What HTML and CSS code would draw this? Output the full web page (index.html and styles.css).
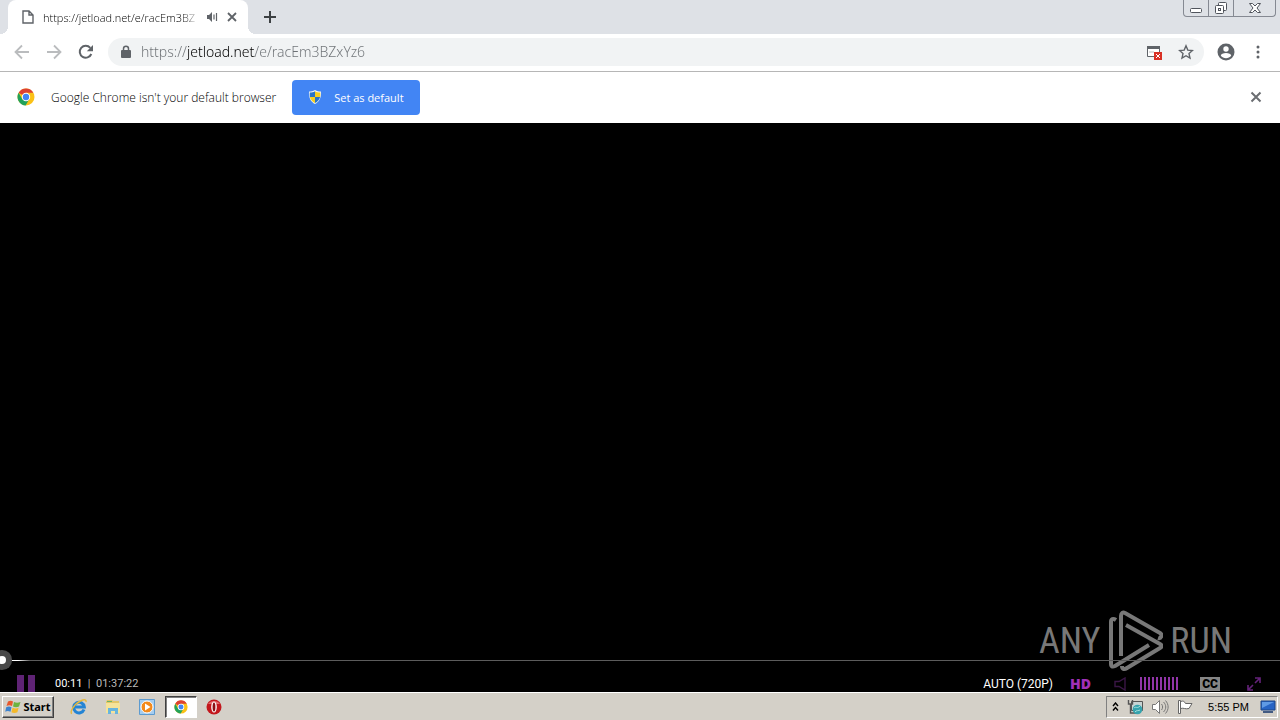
FILE: index.html
```html
<!DOCTYPE html>
<html lang="en">
<head>
    <meta charset="UTF-8">
    <meta name="viewport" content="width=device-width, initial-scale=1.0">
    <title>https://jetload.net/e/racEm3BZxYz6</title>
    <link rel="stylesheet" href="styles.css">
</head>
<body>
    <header class="tab-strip">
        <div class="tab">
            <svg class="icon" width="12" height="14" viewBox="0 0 12 14" fill="none" stroke="#5f6368" stroke-width="1.4"><path d="M1 1h6l4 4v8H1zM7 1v4h4"/></svg>
            <span class="tab-title">https://jetload.net/e/racEm3BZ</span>
            <svg class="icon" width="12" height="12" viewBox="0 0 12 12"><path d="M1 4h2l3-3v10L3 8H1z" fill="#5f6368"/><path d="M8 3.5v5M10.5 2v8" stroke="#5f6368" stroke-width="1.2"/></svg>
            <button class="plain tab-close" aria-label="Close tab">
                <svg width="10" height="10" viewBox="0 0 10 10" stroke="#5f6368" stroke-width="1.8"><path d="M1 1l8 8M9 1L1 9"/></svg>
            </button>
        </div>
        <button class="plain new-tab" aria-label="New tab">
            <svg width="12" height="12" viewBox="0 0 12 12" stroke="#3c4043" stroke-width="2"><path d="M6 0v12M0 6h12"/></svg>
        </button>
        <div class="window-buttons">
            <button aria-label="Minimize">
                <svg width="14" height="12" viewBox="0 0 14 12" fill="#fff" stroke="#50545c"><rect x="1.5" y="6.5" width="11" height="4" rx="1"/></svg>
            </button>
            <button aria-label="Restore">
                <svg width="14" height="14" viewBox="0 0 14 14" fill="#fff" stroke="#50545c"><rect x="4.500" y="1.500" width="8" height="8" rx="1"/><rect x="1.500" y="4.500" width="8" height="8" rx="1"/><rect x="4.500" y="7.500" width="2" height="2"/></svg>
            </button>
            <button class="wide" aria-label="Close">
                <svg width="14" height="12" viewBox="0 0 14 12" fill="#fff" stroke="#50545c"><path d="M1.500 1.500h3L7 4l2.500-2.500h3L9 6l3.500 4.500h-3L7 8l-2.500 2.500h-3L5 6z"/></svg>
            </button>
        </div>
    </header>

    <nav class="toolbar">
        <button class="plain" aria-label="Back">
            <svg width="16" height="16" viewBox="0 0 16 16" fill="none" stroke="#babcbe" stroke-width="1.8"><path d="M15 8H2M8 1.500L1.500 8 8 14.500"/></svg>
        </button>
        <button class="plain" aria-label="Forward">
            <svg width="16" height="16" viewBox="0 0 16 16" fill="none" stroke="#babcbe" stroke-width="1.8"><path d="M1 8h13M8 1.500L14.500 8 8 14.500"/></svg>
        </button>
        <button class="plain" aria-label="Reload">
            <svg width="16" height="16" viewBox="0 0 16 16"><path d="M13.300 10A6 6 0 1 1 12.300 3.800" fill="none" stroke="#5f6368" stroke-width="2"/><path d="M15 1v6.200H8.800z" fill="#5f6368"/></svg>
        </button>
        <div class="omnibox">
            <svg class="icon" width="10" height="14" viewBox="0 0 10 14"><path d="M2.500 6V3.800a2.500 2.500 0 0 1 5 0V6" fill="none" stroke="#5f6368" stroke-width="1.500"/><rect y="5" width="10" height="8" rx="1" fill="#5f6368"/></svg>
            <input class="url" type="text" aria-label="Address" value="https://jetload.net/e/racEm3BZxYz6" spellcheck="false">
            <button class="plain" aria-label="Pop-ups blocked">
                <svg width="16" height="16" viewBox="0 0 16 16"><path d="M1.500 2.500h12v10h-12z" fill="#fff" stroke="#5f6368"/><path d="M1 2h13v3H1z" fill="#5f6368"/><path d="M3 8h5" stroke="#babcbe"/><path d="M8 8h8v8H8z" fill="#d93025"/><path d="M10 10l4 4M14 10l-4 4" stroke="#fff"/></svg>
            </button>
            <button class="plain" aria-label="Bookmark">
                <svg width="16" height="16" viewBox="0 0 16 16" fill="none" stroke="#5f6368" stroke-width="1.400"><path d="M8 1.800l1.800 4.300 4.700.4-3.500 3.100 1 4.500L8 11.700l-4 2.400 1-4.500L1.500 6.500l4.700-.4z"/></svg>
            </button>
        </div>
        <button class="plain" aria-label="Profile">
            <svg width="18" height="18" viewBox="0 0 18 18"><circle cx="9" cy="9" r="8.500" fill="#5f6368"/><circle cx="9" cy="6" r="2.700" fill="#fff"/><path d="M3.800 12.800c0-3.800 10.400-3.800 10.400 0-2.400 3.300-8 3.300-10.400 0z" fill="#fff"/></svg>
        </button>
        <button class="plain menu" aria-label="Menu">
            <svg width="4" height="14" viewBox="0 0 4 14" fill="#5f6368"><circle cx="2" cy="2" r="1.500"/><circle cx="2" cy="7" r="1.500"/><circle cx="2" cy="12" r="1.500"/></svg>
        </button>
    </nav>

    <section class="infobar">
        <svg class="icon" width="18" height="18" viewBox="0 0 18 18"><circle cx="9" cy="9" r="8.500" fill="#fbc116"/><path d="M9 9L1.600 4.800A8.500 8.500 0 0 1 16.400 4.800H9z" fill="#dd4132"/><path d="M1.600 4.800A8.500 8.500 0 0 0 8.600 17.500L12.300 11 5.500 11.500z" fill="#22a25a"/><circle cx="9" cy="9" r="4.200" fill="#fff"/><circle cx="9" cy="9" r="3.200" fill="#4285f4"/></svg>
        <span class="infobar-text">Google Chrome isn't your default browser</span>
        <button class="set-default">
            <svg width="14" height="16" viewBox="0 0 14 16"><path d="M7 1c2 1.500 4 1.500 6 1.500C13.500 9 11 13 7 15 3 13 .500 9 1 2.500c2 0 4 0 6-1.500z" fill="#eef2f4"/><path d="M7 2.200V8H1.900c-.3-1.500-.2-3-.1-4.500 2 0 3.700-.2 5.200-1.300zM7 8h5.100c-.7 2.800-2.500 4.800-5.100 6z" fill="#2874c8"/><path d="M7 2.200c1.500 1.100 3.200 1.300 5.200 1.300.1 1.500.2 3-.1 4.500H7zM7 8v6C4.400 12.800 2.600 10.800 1.900 8z" fill="#f6cf20"/></svg>
            Set as default
        </button>
        <button class="plain infobar-close" aria-label="Dismiss">
            <svg width="12" height="12" viewBox="0 0 12 12" stroke="#6b6e72" stroke-width="2"><path d="M1.500 1.500l9 9M10.500 1.500l-9 9"/></svg>
        </button>
    </section>

    <main class="player">
        <div class="watermark">
            <span>ANY</span>
            <svg width="56" height="64" viewBox="0 0 56 64" fill="none" stroke="#787878" stroke-width="4" stroke-linejoin="round"><path d="M9 11c-3-2-5-1-5 2v42c0 3 2 3 4 2L42 36"/><path d="M14 47V7c0-3 2-4 4-3l35 20c3 2 1 6-2 5"/><path d="M19 16l34 19c2 1 2 3 0 4L20 59c-3 2-5 1-5-2"/></svg>
            <span>RUN</span>
        </div>
        <input class="seek" type="range" aria-label="Seek" min="0" max="5842" value="0">
        <div class="controls">
            <button class="plain pause" aria-label="Pause">
                <svg width="18" height="20" viewBox="0 0 18 20" fill="#5f2375"><path d="M0 0h7v20H0zM11 0h7v20h-7z"/></svg>
            </button>
            <span class="time">00:11 <span class="total">&nbsp;|&nbsp; 01:37:22</span></span>
            <button class="plain quality">AUTO (720P)</button>
            <button class="plain hd">HD</button>
            <button class="plain mute" aria-label="Mute">
                <svg width="12" height="14" viewBox="0 0 12 14" fill="none" stroke="#3a1646" stroke-width="1.400"><path d="M1 4.500h4l6-3.500v12L5 9.500H1z"/></svg>
            </button>
            <input class="volume" type="range" aria-label="Volume" value="100">
            <button class="cc">CC</button>
            <button class="plain fullscreen" aria-label="Fullscreen">
                <svg width="14" height="14" viewBox="0 0 14 14" fill="none" stroke="#64227a" stroke-width="1.600"><path d="M8 1h5v5M13 1L8 6M6 13H1V8M1 13l5-5"/></svg>
            </button>
        </div>
    </main>

    <footer class="taskbar">
        <button class="start">
            <svg width="17" height="16" viewBox="0 0 17 16"><path d="M3 2.500c2-1 3.500-1 5 0L7 7c-2-1-3.500-1-5.500 0z" fill="#e8582c"/><path d="M9 3c2 1 4 1 6.500 0L14 7.500c-2 1-4 1-6 0z" fill="#6cb33f"/><path d="M1.200 8.300c2-1 3.500-1 5.300 0l-1 4.500c-2-1-3.500-1-5.300 0z" fill="#3c83cf"/><path d="M7.600 8.700c2 1 4 1 6 0l-1.200 4.500c-2 1-4 1-6 0z" fill="#f4b92a"/></svg>
            Start
        </button>
        <div class="launch">
            <button class="plain" aria-label="Internet Explorer">
                <svg width="18" height="18" viewBox="0 0 18 18" fill="none"><path d="M14 11.500A5.300 5.300 0 1 1 14.300 9H4.500" stroke="#2484d4" stroke-width="3"/><path d="M2 15.500C-1 15 4 6 10.500 3c4-2 6-1.500 5.500 1" stroke="#e6b83c" stroke-width="1.400"/></svg>
            </button>
            <button class="plain" aria-label="Explorer">
                <svg width="18" height="18" viewBox="0 0 18 18"><path d="M2 4l1-2h5l1 1h6v3H2z" fill="#e3c768"/><path d="M2 5h14v10H2z" fill="#f5e39a"/><path d="M3 3h5v1H3z" fill="#6bb26b"/><path d="M4 16v-6h10v6h-3v-3H7v3z" fill="#68b5de"/></svg>
            </button>
            <button class="plain" aria-label="Media Player">
                <svg width="18" height="18" viewBox="0 0 18 18"><path d="M1.500 1.500h15v15h-15z" fill="#a4cdf0" stroke="#5d9bd0"/><circle cx="9" cy="9" r="6" fill="#f38a1c" stroke="#fff"/><path d="M7 5.500v7L12.500 9z" fill="#fff"/></svg>
            </button>
            <button class="task-active" aria-label="Chrome">
                <svg width="14" height="14" viewBox="0 0 18 18"><circle cx="9" cy="9" r="8.500" fill="#fbc116"/><path d="M9 9L1.600 4.800A8.500 8.500 0 0 1 16.400 4.800H9z" fill="#dd4132"/><path d="M1.600 4.800A8.500 8.500 0 0 0 8.600 17.500L12.300 11 5.500 11.500z" fill="#22a25a"/><circle cx="9" cy="9" r="4.200" fill="#fff"/><circle cx="9" cy="9" r="3.200" fill="#4285f4"/></svg>
            </button>
            <button class="plain" aria-label="Opera">
                <svg width="16" height="16" viewBox="0 0 16 16"><circle cx="8" cy="8" r="7.500" fill="#c3171d"/><path d="M2 5a7 6 0 0 1 12 0z" fill="#e4686b"/><ellipse cx="8" cy="8" rx="2.800" ry="5.500" fill="#fff"/><ellipse cx="8" cy="8" rx="1.400" ry="4.500" fill="#8c0f14"/></svg>
            </button>
        </div>
        <div class="tray">
            <svg width="7" height="10" viewBox="0 0 7 10" fill="none" stroke="#000" stroke-width="1.400"><path d="M1 4l2.500-3L6 4M1 8.500l2.500-3L6 8.500"/></svg>
            <svg width="16" height="16" viewBox="0 0 16 16"><path d="M4.500 2.500h11v9h-11z" fill="#c8d4d4" stroke="#555"/><path d="M1.500 1v4h4V1M3.500 5v9H9" fill="none" stroke="#555" stroke-width="1.400"/><circle cx="10.500" cy="10.500" r="4.800" fill="#36a3ae"/><path d="M7 9c2-2 3 1 6-2M8 13c1-2 4-1 5-2" fill="none" stroke="#a7e0dc"/></svg>
            <svg width="18" height="16" viewBox="0 0 18 16" fill="#fff" stroke="#777"><path d="M1.500 5.500h3l4-4v13l-4-4h-3z"/><path d="M10.500 5c1.500 2 1.500 4 0 6M12.500 3c3 3 3 7 0 10M14.500 1.500c3.500 4 3.500 9 0 13" fill="none"/></svg>
            <svg width="16" height="16" viewBox="0 0 16 16" fill="#fff" stroke="#666"><path d="M1.500 1.500h2v13h-2zM3.500 2.500c3-1 4 0 5 2h6.500l-3 5c-4 1-5-1-8.500 0z"/></svg>
            <span class="clock">5:55 PM</span>
            <svg width="16" height="14" viewBox="0 0 16 14"><path d="M1 1h14v9H1z" fill="#2764c4" stroke="#1c4485"/><path d="M2 2h12L2 8z" fill="#5f9ae5"/><path d="M3 11h10v2H3z" fill="#435b82"/></svg>
        </div>
    </footer>
</body>
</html>
```
FILE: styles.css
```css
* {
    box-sizing: border-box;
}
body {
    margin: 0;
    min-height: 100vh;
    display: flex;
    flex-direction: column;
    font-family: "Noto Sans", "Open Sans", sans-serif;
    font-size: 12px;
    color: #000;
    background: #fff;
}
button,
input {
    font: inherit;
    color: inherit;
    margin: 0;
}
button {
    display: flex;
    align-items: center;
    justify-content: center;
    padding: 0;
}
svg {
    display: block;
    flex: none;
}
.plain {
    border: 0;
    background: none;
}

/* tabs */
.tab-strip {
    display: flex;
    height: 34px;
    padding-left: 8px;
    background: #dee1e6;
}
.tab {
    position: relative;
    display: flex;
    align-items: center;
    width: 240px;
    padding: 0 10px 0 14px;
    background: #fff;
    border-radius: 8px 8px 0 0;
}
.tab::before,
.tab::after {
    content: "";
    position: absolute;
    bottom: 0;
    width: 8px;
    height: 8px;
}
.tab::before {
    left: -8px;
    background: radial-gradient(circle at 0 0, #dee1e6 8px, #fff 8px);
}
.tab::after {
    right: -8px;
    background: radial-gradient(circle at 100% 0, #dee1e6 8px, #fff 8px);
}
.tab-title {
    flex: 1;
    margin: 0 0 0 9px;
    white-space: nowrap;
    font-family: "Open Sans", sans-serif;
    font-size: 11px;
    font-weight: 300;
    mask-image: linear-gradient(to right, #000 138px, transparent 158px);
}
.tab-close {
    width: 12px;
    height: 16px;
    margin: 0 0 0 8px;
}
.new-tab {
    width: 28px;
    margin-left: 8px;
}
.window-buttons {
    display: flex;
    height: 17px;
    margin: 0 4px 0 auto;
    border: 1px solid #858992;
    border-top: 0;
    border-radius: 0 0 4px 4px;
}
.window-buttons button {
    width: 25px;
    border: 0;
    border-right: 1px solid #858992;
    background: none;
}
.window-buttons .wide {
    width: 41px;
    border-right: 0;
}

/* address row */
.toolbar {
    display: flex;
    align-items: center;
    gap: 16px;
    height: 38px;
    padding: 0 20px 2px 14px;
    border-bottom: 1px solid #b6b6b6;
}
.omnibox {
    flex: 1;
    display: flex;
    align-items: center;
    gap: 16px;
    height: 28px;
    margin: 0 -3px 0 -2px;
    padding: 0 10px 0 13px;
    background: #f1f3f4;
    border-radius: 14px;
}
.menu {
    margin-left: 5px;
}
.url {
    flex: 1;
    min-width: 0;
    margin-left: -6px;
    padding: 0;
    border: 0;
    outline: 0;
    font-size: 14px;
    font-weight: 300;
    /* host name is darker than the scheme and the path */
    background: linear-gradient(to right, #6d7175 46px, #000 46px, #000 114px, #6d7175 114px);
    background-clip: text;
    -webkit-background-clip: text;
    -webkit-text-fill-color: transparent;
}

/* default browser bar */
.infobar {
    display: flex;
    align-items: center;
    height: 51px;
    padding: 0 18px 1px 17px;
}
.infobar-text {
    margin: 0 16px;
    font-family: "Open Sans", sans-serif;
    font-weight: 300;
}
.set-default {
    gap: 12px;
    height: 35px;
    padding: 0 16px;
    border: 0;
    border-radius: 4px;
    background: #4285f4;
    color: #fff;
    font-family: "Open Sans", sans-serif;
    font-size: 11px;
}
.infobar-close {
    margin-left: auto;
}

/* video */
.player {
    position: relative;
    flex: 1;
    display: flex;
    flex-direction: column;
    justify-content: flex-end;
    overflow: hidden;
    background: #000;
    color: #fff;
}
.watermark {
    position: absolute;
    right: 48px;
    bottom: 19px;
    display: flex;
    align-items: center;
    gap: 7px;
    font-family: "Roboto Condensed", "Liberation Sans Narrow", sans-serif;
    font-size: 36px;
    color: #787878;
}
.seek {
    appearance: none;
    position: relative;
    height: 20px;
    margin: 0 0 0 -2px;
    background: linear-gradient(to right, #fff 20px, #5c5c5c 32px) center / 100% 1px no-repeat;
}
.seek::-webkit-slider-thumb {
    appearance: none;
    width: 8px;
    height: 8px;
    border-radius: 50%;
    background: #fff;
    box-shadow: 0 0 0 6px #484848;
}
.controls {
    display: flex;
    align-items: center;
    height: 22px;
    padding: 0 19px 0 17px;
    overflow: hidden;
    font-family: Roboto, sans-serif;
}
.pause {
    align-self: flex-start;
    margin-top: 5px;
}
.time {
    margin: 5px auto 0 20px;
    font-size: 11px;
}
.total {
    color: #bbb;
}
.quality {
    margin-top: 5px;
}
.hd {
    margin: 5px 23px 0 17px;
    color: #a030b8;
    font-family: "Open Sans", sans-serif;
    font-size: 14px;
    font-weight: 800;
}
.mute {
    margin-top: 5px;
}
.volume {
    appearance: none;
    width: 38px;
    height: 13px;
    margin: 5px 0 0 14px;
    background: repeating-linear-gradient(to right, #9135a8 0 2px, transparent 2px 4px);
}
.volume::-webkit-slider-thumb {
    appearance: none;
    width: 0;
    height: 0;
}
.cc {
    width: 20px;
    height: 14px;
    margin: 5px 27px 0 22px;
    border: 0;
    background: #858585;
    color: #000;
    font-size: 12px;
    font-weight: 900;
}
.fullscreen {
    margin-top: 5px;
}

/* taskbar */
.taskbar {
    display: flex;
    align-items: center;
    height: 28px;
    padding: 0 2px;
    background: #d4d0c8;
    border-top: 1px solid #fff;
}
.start {
    gap: 1px;
    width: 52px;
    height: 22px;
    border: 1px solid;
    border-color: #fff #404040 #404040 #fff;
    box-shadow: inset -1px -1px #808080;
    background: #d4d0c8;
    font-size: 11px;
    font-weight: 700;
}
.launch {
    display: flex;
    align-items: center;
    gap: 16px;
    margin-left: 16px;
}
.task-active {
    width: 32px;
    height: 22px;
    margin: 0 -7px;
    border: 1px solid;
    border-color: #404040 #fff #fff #404040;
    box-shadow: inset 1px 1px #808080;
    background: #fff;
}
.tray {
    display: flex;
    align-items: center;
    gap: 8px;
    height: 22px;
    margin-left: auto;
    padding: 0 1px 0 5px;
    border: 1px solid;
    border-color: #808080 #fff #fff #808080;
}
.clock {
    margin: 0 3px 0 7px;
    font-family: "Liberation Sans", sans-serif;
    font-size: 11px;
}
```
